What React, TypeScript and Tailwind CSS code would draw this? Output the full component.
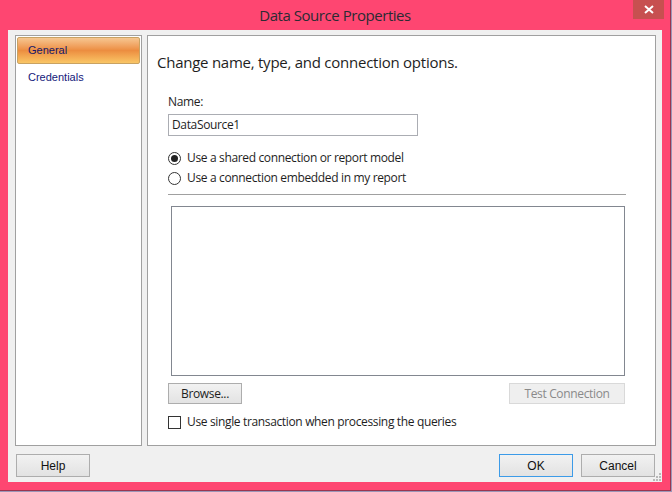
import React from "react";

const seg = { fontFamily: '"Open Sans", "Noto Sans", sans-serif' };
const tah = { fontFamily: '"Liberation Sans", Arial, sans-serif' };

function Radio({ checked, label }: { checked?: boolean; label: string }) {
    return (
        <div className="flex items-center h-[20px]">
            <span className="w-[13px] h-[13px] rounded-full border border-[#333] bg-white flex items-center justify-center">
                {checked && <span className="w-[7px] h-[7px] rounded-full bg-[#222]" />}
            </span>
            <span className="ml-[6px] text-[12px] tracking-[-0.35px] text-[#1e1e1e]">{label}</span>
        </div>
    );
}

export default function App() {
    return (
        <div className="w-[672px] h-[492px] bg-[#9c96b8]" style={seg}>
            <div className="w-[671px] h-[491px] bg-[#fe4671] border-r border-b border-[#9a3550] flex flex-col">
                {/* Title bar */}
                <div className="relative h-[30px] flex items-center justify-center">
                    <span className="text-[15px] tracking-[-0.45px] text-[#2b2b33]">Data Source Properties</span>
                    <button className="absolute right-[6px] top-0 w-[31px] h-[19px] bg-[#c75050] flex items-center justify-center">
                        <svg width="10" height="9" viewBox="0 0 10 9">
                            <path d="M1 1L9 8M9 1L1 8" stroke="white" strokeWidth="2" />
                        </svg>
                    </button>
                </div>

                {/* Client area */}
                <div className="mx-[8px] h-[452px] bg-[#f0f0f0] flex flex-col pl-[7px] pr-[6px] pt-[5px] pb-[5px] relative">
                    <div className="flex h-[413px]">
                        {/* Page list */}
                        <div className="w-[127px] border border-[#a0a0a0] bg-white p-[1px] flex flex-col" style={tah}>
                            <div className="h-[27px] border border-[#c9a262] rounded-[2px] bg-gradient-to-b from-[#f6c690] via-[#ec8d40] to-[#f9c666] flex items-center pl-[10px] text-[11px] text-[#14186a]">
                                General
                            </div>
                            <div className="h-[27px] flex items-center pl-[11px] text-[11px] text-[#14207a]">
                                Credentials
                            </div>
                        </div>

                        {/* Page content */}
                        <div className="ml-[5px] flex-1 border border-[#a0a0a0] bg-white flex flex-col pl-[20px] pr-[29px] pt-[15px]">
                            <div className="-ml-[11px] text-[15px] tracking-[-0.25px] text-[#1e1e1e] leading-[22px]">
                                Change name, type, and connection options.
                            </div>
                            <div className="mt-[21px] text-[12px] tracking-[-0.35px] text-[#1e1e1e] leading-[16px]">Name:</div>
                            <div className="mt-[4px] w-[250px] h-[22px] border border-[#abadb3] bg-white flex items-center pl-[3px] text-[12px] tracking-[-0.35px] text-[#1e1e1e]">
                                DataSource1
                            </div>
                            <div className="mt-[12px] flex flex-col">
                                <Radio checked label="Use a shared connection or report model" />
                                <Radio label="Use a connection embedded in my report" />
                            </div>
                            <div className="mt-[6px] h-px bg-[#a0a0a0]" />
                            <div className="mt-[11px] ml-[3px] mr-[1px] h-[170px] border border-[#828790] bg-white" />
                            <div className="mt-[7px] flex justify-between mr-[1px]">
                                <button className="w-[74px] h-[21px] border border-[#adadad] bg-gradient-to-b from-[#f2f2f2] to-[#e3e3e3] text-[12px] tracking-[-0.35px] text-[#1e1e1e]">
                                    Browse...
                                </button>
                                <button className="w-[116px] h-[21px] border border-[#d9d9d9] bg-[#efefef] text-[12px] tracking-[-0.35px] text-[#8a8a8a]">
                                    Test Connection
                                </button>
                            </div>
                            <div className="mt-[9px] flex items-center">
                                <span className="w-[13px] h-[13px] border border-[#333] bg-white" />
                                <span className="ml-[6px] text-[12px] tracking-[-0.35px] text-[#1e1e1e]">
                                    Use single transaction when processing the queries
                                </span>
                            </div>
                        </div>
                    </div>

                    {/* Footer buttons */}
                    <div className="mt-[8px] flex items-center" style={tah}>
                        <button className="ml-[1px] w-[74px] h-[23px] border border-[#adadad] bg-gradient-to-b from-[#f2f2f2] to-[#e2e2e2] text-[12px] text-[#111]">
                            Help
                        </button>
                        <div className="flex-1" />
                        <button className="w-[74px] h-[23px] border border-[#3c9be8] bg-gradient-to-b from-[#f2f2f2] to-[#e2e2e2] text-[12px] text-[#111]">
                            OK
                        </button>
                        <button className="ml-[8px] mr-[1px] w-[74px] h-[23px] border border-[#adadad] bg-gradient-to-b from-[#f2f2f2] to-[#e2e2e2] text-[12px] text-[#111]">
                            Cancel
                        </button>
                    </div>

                    {/* Size grip */}
                    <svg className="absolute right-[1px] bottom-[1px]" width="8" height="8" viewBox="0 0 8 8">
                        <rect x="6" y="0" width="2" height="2" fill="#b8b8b8" />
                        <rect x="3" y="3" width="2" height="2" fill="#b8b8b8" />
                        <rect x="6" y="3" width="2" height="2" fill="#b8b8b8" />
                        <rect x="0" y="6" width="2" height="2" fill="#b8b8b8" />
                        <rect x="3" y="6" width="2" height="2" fill="#b8b8b8" />
                        <rect x="6" y="6" width="2" height="2" fill="#b8b8b8" />
                    </svg>
                </div>
            </div>
        </div>
    );
}
